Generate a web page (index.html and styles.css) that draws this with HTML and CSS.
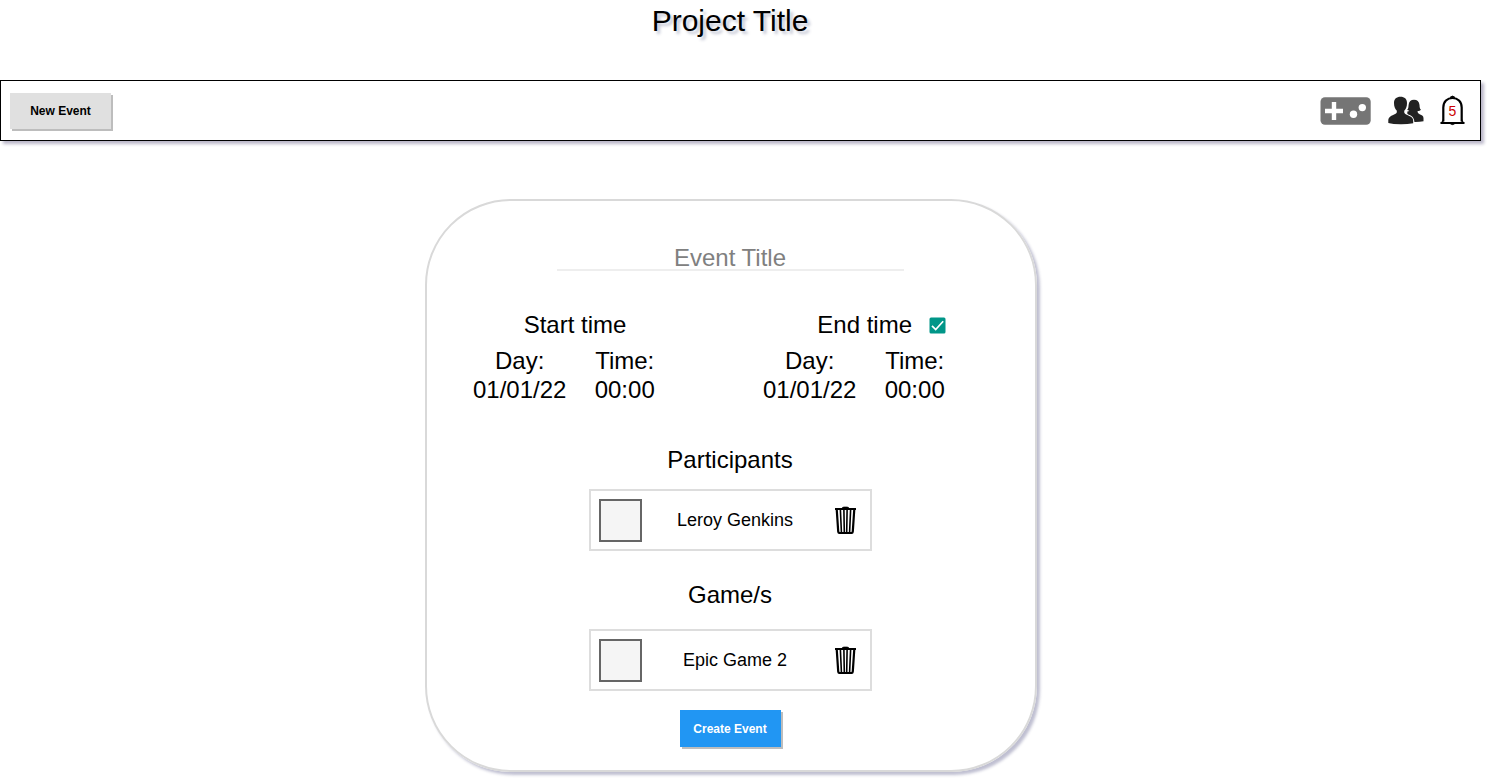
FILE: index.html
```html
<!DOCTYPE html>
<html lang="en">
<head>
<meta charset="utf-8">
<title>Project Title</title>
<link rel="stylesheet" href="styles.css">
</head>
<body>
<h1 class="page-title">Project Title</h1>
<header class="toolbar">
  <button class="btn btn-new">New Event</button>
  <nav class="actions">
    <svg class="icon-games" viewBox="0 0 51 28"><rect x=".5" y=".3" width="50.200" height="27.400" rx="4.500" fill="#757575"/><path d="M14 5v18M5 14h18" stroke="#fff" stroke-width="4.4"/><circle cx="33.500" cy="17.300" r="3.700" fill="#fff"/><circle cx="42.300" cy="10.600" r="3.700" fill="#fff"/></svg>
    <svg class="icon-people" viewBox="0 0 36 29" fill="#222"><path d="M19.300 15.400C20.300 15.400 21 15.300 21.300 14.700c-1-.2-1.700-.5-2.100-1 1.400-1.200 1.200-3 1.400-4.700C20.800 5.600 22.900 3.800 26 3.800s5.300 1.900 5.500 5.200c.1 2.200.3 3.700 1.500 4.800-.7.800-2 1.200-3.400 1.300-.1 1.600.5 2.400 2 3.100 2.600 1.200 3.900 1.700 3.900 4.100v2.900q-4 .9-9.100.8c-.4-4.800-2.700-6.200-7-7.900z"/><path d="M12.500.7c4 0 6.500 2.200 6.500 6.300 0 3.500-1 5.800-2.600 7.600-.6 2.200 0 3.200 2.300 4.100 5 2 6.500 3.200 6.500 6.400v2.200Q19 28.400 12.400 28.300 5 28.300.3 27v-2c0-3.200 1.500-4.600 5.800-6.400 2.400-1 3.200-1.800 2.600-4C7.100 12.800 6 10.500 6 7 6 2.900 8.500.7 12.500.7z"/></svg>
    <span class="bell">
      <svg viewBox="0 0 25 31" fill="none" stroke="#000"><path d="M3.300 26.500V12.500C3.300 6.500 7.400 3 12.500 3s9.200 3.500 9.200 9.500v14" stroke-width="2.200"/><path d="M1 27.900Q3.300 27 3.400 24.500M24 27.900Q21.700 27 21.600 24.500" stroke-width="1.400"/><path d="M.5 28h24" stroke-width="2"/><path d="M10 2.400Q12.500-.4 15 2.400zM9.800 28.400q2.700 2.500 5.400 0z" fill="#000" stroke-width=".7"/></svg>
      <span class="count">5</span>
    </span>
  </nav>
</header>
<main class="card">
  <div class="event-title">Event Title</div>
  <div class="times">
    <section class="slot">
      <h2 class="slot-head">Start time</h2>
      <div class="fields">
        <div class="day">Day:<br>01/01/22</div>
        <div class="hour">Time:<br>00:00</div>
      </div>
    </section>
    <section class="slot">
      <h2 class="slot-head slot-head-end">End time <svg class="check" viewBox="0 0 17 17"><rect x=".5" y=".5" width="16" height="16" rx="1.500" fill="#009688"/><path d="M3 8.900l3.700 3.700 7.500-8.300" fill="none" stroke="#fff" stroke-width="1.700"/></svg></h2>
      <div class="fields">
        <div class="day">Day:<br>01/01/22</div>
        <div class="hour">Time:<br>00:00</div>
      </div>
    </section>
  </div>
  <h2 class="section-title">Participants</h2>
  <div class="item">
    <span class="thumb"></span>
    <span class="name">Leroy Genkins</span>
    <svg class="trash" viewBox="0 0 21 28" fill="none" stroke="#000"><path d="M0 3h21" stroke-width="2"/><path d="M7 2.300Q7.500 1.100 9 1.100h3q1.500 0 2 1.200z" fill="#000" stroke-width=".8"/><path d="M1.700 3l1.500 22.400q.1 1.600 1.600 1.600h11.400q1.500 0 1.600-1.600L19.300 3" stroke-width="2.200"/><path d="M5.400 4l1 22M8.900 4l.4 22M12.100 4l-.4 22M15.600 4l-1 22" stroke-width="1.600"/></svg>
  </div>
  <h2 class="section-title section-games">Game/s</h2>
  <div class="item">
    <span class="thumb"></span>
    <span class="name">Epic Game 2</span>
    <svg class="trash" viewBox="0 0 21 28" fill="none" stroke="#000"><path d="M0 3h21" stroke-width="2"/><path d="M7 2.300Q7.500 1.100 9 1.100h3q1.500 0 2 1.200z" fill="#000" stroke-width=".8"/><path d="M1.700 3l1.500 22.400q.1 1.600 1.600 1.600h11.400q1.500 0 1.600-1.600L19.300 3" stroke-width="2.200"/><path d="M5.400 4l1 22M8.900 4l.4 22M12.100 4l-.4 22M15.600 4l-1 22" stroke-width="1.600"/></svg>
  </div>
  <button class="btn btn-create">Create Event</button>
</main>
</body>
</html>
```
FILE: styles.css
```css
* { box-sizing: border-box; }
body {
  margin: 0;
  height: 783px;
  overflow: hidden;
  background: #fff;
  color: #000;
  font-family: "Liberation Sans", Arial, sans-serif;
}
h1, h2 { margin: 0; font-weight: 400; }
svg { display: block; flex: none; }
.page-title {
  width: 1460px;
  height: 80px;
  padding-top: 3px;
  font-size: 30px;
  line-height: 36px;
  text-align: center;
  text-shadow: 3px 3px 3px rgba(61, 69, 116, .3);
}
.toolbar {
  display: flex;
  align-items: center;
  justify-content: space-between;
  width: 1481px;
  height: 61px;
  padding: 0 15px 0 9px;
  border: 1px solid #000;
  background: #fff;
  box-shadow: 3px 3px 3px rgba(50, 40, 95, .33);
}
.btn {
  width: 101px;
  height: 37px;
  padding: 0;
  border: 0;
  font: bold 12px/37px "Liberation Sans", Arial, sans-serif;
  text-align: center;
}
.btn-new {
  height: 36px;
  background: #e0e0e0;
  color: #000;
  line-height: 36px;
  box-shadow: 2px 2px 0 #bdbdbd;
}
.actions { display: flex; align-items: center; }
.icon-games { width: 51px; height: 28px; }
.icon-people { width: 36px; height: 29px; margin-left: 17px; }
.bell { position: relative; width: 25px; height: 31px; margin-left: 16px; }
.bell svg { width: 25px; height: 31px; }
.count {
  position: absolute;
  inset: 0;
  color: #c00;
  font-size: 14px;
  line-height: 32px;
  text-align: center;
}
.card {
  display: flex;
  flex-direction: column;
  align-items: center;
  width: 612px;
  height: 573px;
  margin: 58px 0 0 425px;
  padding: 42px 2px 0 0;
  border: 2px solid #d9d9d9;
  border-radius: 86px;
  font-size: 24px;
  box-shadow: 3px 3px 3px rgba(61, 60, 116, .33);
}
.event-title {
  width: 347px;
  height: 28px;
  border-bottom: 2px solid #eee;
  color: #808080;
  line-height: 30px;
  text-align: center;
}
.times { display: flex; gap: 90px; width: 490px; margin: 38px 20px 0 0; }
.slot { width: 200px; }
.slot-head { font-size: 24px; line-height: 32px; text-align: center; }
.slot-head-end { display: flex; align-items: center; justify-content: flex-end; gap: 17px; padding-right: 19px; }
.check { width: 17px; height: 17px; }
.fields { display: flex; margin: 0 2px 0 -2px; padding-top: 5px; line-height: 29px; text-align: center; }
.day { flex: none; white-space: nowrap; }
.hour { flex: 1; margin-left: 10px; }
.section-title { margin-top: 41px; font-size: 24px; line-height: 30px; }
.section-games { margin-top: 29px; }
.item {
  display: flex;
  align-items: center;
  width: 283px;
  height: 62px;
  margin-top: 14px;
  padding: 0 14px 0 8px;
  border: 2px solid #ddd;
}
.section-games + .item { margin-top: 19px; }
.thumb { width: 43px; height: 43px; border: 2px solid #666; background: #f5f5f5; }
.name { flex: 1; padding-right: 6px; font-size: 18px; text-align: center; }
.trash { width: 21px; height: 28px; }
.btn-create { margin-top: 19px; padding-top: 1px; background: #2196f3; color: #fff; box-shadow: 2px 2px 0 #bdbdbd; }
```
